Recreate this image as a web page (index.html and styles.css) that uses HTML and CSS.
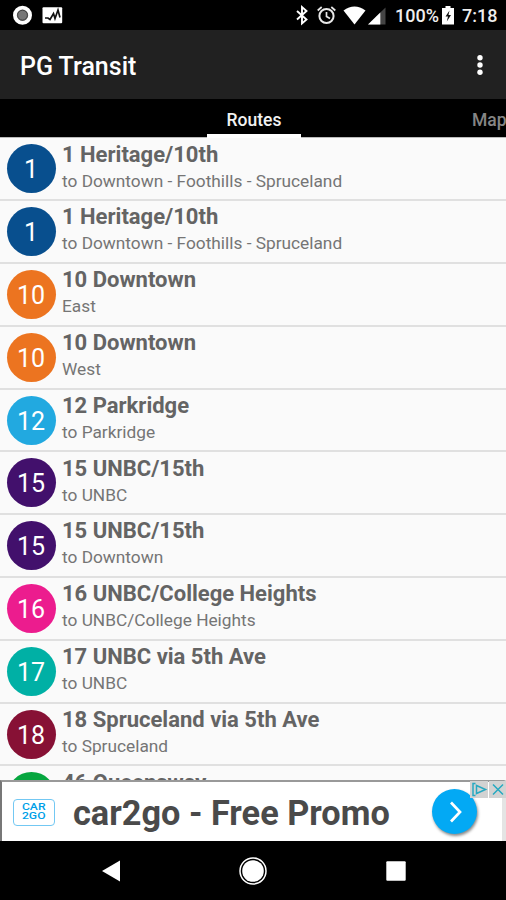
FILE: index.html
```html
<!DOCTYPE html>
<html lang="en">
<head>
<meta charset="utf-8">
<title>PG Transit</title>
<link rel="stylesheet" href="styles.css">
</head>
<body>
<div class="phone">
  <header class="status">
    <svg class="status-left" width="70" height="30" viewBox="0 0 70 30">
      <circle cx="22.5" cy="15.2" r="7.6" fill="#666" stroke="#fff" stroke-width="3.800"/>
      <circle cx="22.5" cy="15.2" r="4.900" fill="#777" stroke="#444" stroke-width="1"/>
      <rect x="42.5" y="7.3" width="19.7" height="16" rx="1" fill="#fff"/>
      <path d="M45 18h3l2 1.500 3.500-6 1.500 5 3-8.500 2 7.500" fill="none" stroke="#111" stroke-width="1.7"/>
    </svg>
    <svg class="status-icons" width="98" height="30" viewBox="290 0 98 30">
      <path d="M297 11l9.500 8.500-4.500 4V7l4.500 4-9.500 8.500" fill="none" stroke="#fff" stroke-width="1.900"/>
      <circle cx="326.500" cy="16" r="7.100" fill="none" stroke="#e8e8e8" stroke-width="2"/>
      <path d="M317.700 10.500l4-3.500M335.300 10.500l-4-3.500M326.500 12v4.500l3.500 2" fill="none" stroke="#e8e8e8" stroke-width="1.700"/>
      <path d="M343.500 10.500q11-8 22 0L354.500 24.500z" fill="#fff"/>
      <path d="M385.500 7.500V24.500H368z" fill="#444"/>
      <path d="M380.300 12.500V24.500H368z" fill="#fff"/>
    </svg>
    <span class="battery-level">100%</span>
    <svg class="battery" width="12" height="19" viewBox="0 0 12 19">
      <path d="M3.500 2V0h5v2H12v16.500H0V2z" fill="#fff"/>
      <path d="M7.500 4.500L3.500 10.500H6L4.800 15.500 9 9H6.500z" fill="#111"/>
    </svg>
    <span class="clock">7:18</span>
  </header>
  <div class="appbar">
    <h1>PG Transit</h1>
    <svg class="more" width="8" height="24" viewBox="0 0 8 24"><g fill="#fff"><circle cx="4" cy="4.700" r="2.700"/><circle cx="4" cy="12" r="2.700"/><circle cx="4" cy="19.300" r="2.700"/></g></svg>
  </div>
  <nav class="tabs">
    <span class="tab active">Routes</span>
    <span class="tab next">Map</span>
  </nav>
  <main class="routes">
    <div class="route"><span class="badge heritage">1</span><div class="info"><h2>1 Heritage/10th</h2><p>to Downtown - Foothills - Spruceland</p></div></div>
    <div class="route"><span class="badge heritage">1</span><div class="info"><h2>1 Heritage/10th</h2><p>to Downtown - Foothills - Spruceland</p></div></div>
    <div class="route"><span class="badge downtown">10</span><div class="info"><h2>10 Downtown</h2><p>East</p></div></div>
    <div class="route"><span class="badge downtown">10</span><div class="info"><h2>10 Downtown</h2><p>West</p></div></div>
    <div class="route"><span class="badge parkridge">12</span><div class="info"><h2>12 Parkridge</h2><p>to Parkridge</p></div></div>
    <div class="route"><span class="badge unbc">15</span><div class="info"><h2>15 UNBC/15th</h2><p>to UNBC</p></div></div>
    <div class="route"><span class="badge unbc">15</span><div class="info"><h2>15 UNBC/15th</h2><p>to Downtown</p></div></div>
    <div class="route"><span class="badge college">16</span><div class="info"><h2>16 UNBC/College Heights</h2><p>to UNBC/College Heights</p></div></div>
    <div class="route"><span class="badge fifth">17</span><div class="info"><h2>17 UNBC via 5th Ave</h2><p>to UNBC</p></div></div>
    <div class="route"><span class="badge spruceland">18</span><div class="info"><h2>18 Spruceland via 5th Ave</h2><p>to Spruceland</p></div></div>
    <div class="route"><span class="badge queensway"></span><div class="info"><h2>46 Queensway</h2></div></div>
  </main>
  <aside class="ad">
    <div class="ad-logo"><span>CAR</span><span>2GO</span></div>
    <strong>car2go - Free Promo</strong>
    <span class="go"><svg width="14" height="24" viewBox="0 0 14 24"><path d="M2 2.500l9 9.500-9 9.500" fill="none" stroke="#fff" stroke-width="2.700"/></svg></span>
    <div class="choices">
      <svg width="18" height="17" viewBox="0 0 18 17"><path d="M5.500 2.500H3v12h2.500M6.500 4.500l9 4-9 4z" fill="none" stroke="#27a9c1" stroke-width="1.500"/></svg>
      <svg width="17" height="17" viewBox="0 0 17 17"><path d="M4 3.500l10 10M14 3.500l-10 10" fill="none" stroke="#27a9c1" stroke-width="1.500"/></svg>
    </div>
  </aside>
  <footer class="navbar">
    <svg width="20" height="22" viewBox="0 0 20 22"><path d="M19 .5v21L1 11z" fill="#fff"/></svg>
    <svg width="30" height="30" viewBox="0 0 30 30"><circle cx="15" cy="15" r="13" fill="none" stroke="#fff" stroke-width="1.500"/><circle cx="15" cy="15" r="10.800" fill="#fff"/></svg>
    <svg width="20" height="20" viewBox="0 0 20 20"><rect x=".3" y=".3" width="19.400" height="19.400" rx="1" fill="#fff"/></svg>
  </footer>
</div>
</body>
</html>
```
FILE: styles.css
```css
* { box-sizing: border-box; }
body { margin: 0; background: #000; font-family: Roboto, sans-serif; }
h1, h2, p { margin: 0; white-space: nowrap; }
svg { display: block; flex: none; }
.phone {
  width: 506px;
  height: 900px;
  display: grid;
  grid-template-rows: 30px 69px 39px 642px 61px 59px;
  overflow: hidden;
}
.status { display: flex; align-items: center; background: #000; color: #eee; font-size: 18px; font-weight: 500; line-height: 30px; padding-right: 9px; }
.status-icons { margin-left: auto; }
.battery-level { width: 46px; margin-left: 7px; padding-top: 2px; }
.battery { margin-left: 1px; }
.clock { width: 35px; margin-left: 8px; padding-top: 2px; }
.appbar { display: flex; align-items: center; justify-content: space-between; padding: 4px 22px 0 20px; background: #212121; color: #fff; }
.appbar h1 { font-size: 25px; font-weight: 500; line-height: 36px; }
.more { margin-top: -4px; }
.tabs { display: grid; grid-template-columns: 207px 94px 1fr; background: #000; color: #f2f2f2; font-size: 17.5px; font-weight: 500; line-height: 42px; border-bottom: 1px solid #bbb; }
.tab { white-space: nowrap; }
.active { grid-column: 2; text-align: center; border-bottom: 4px solid #fff; height: 39px; }
.next { color: #858585; padding-left: 171px; overflow: hidden; }
.routes { background: #fafafa; overflow: hidden; padding-top: .4px; }
.route { height: 62.8px; display: flex; align-items: flex-start; padding: 6px 7px 0; border-bottom: 2px solid #e0e0e0; }
.badge { width: 49px; height: 49px; flex: none; border-radius: 50%; color: #fff; font-size: 25px; line-height: 51px; text-align: center; padding-right: 1px; }
.heritage { background: #084f8e; }
.downtown { background: #ec7420; }
.parkridge { background: #22a9e0; }
.unbc { background: #42106c; }
.college { background: #ec1c8e; }
.fifth { background: #00b0a5; }
.spruceland { background: #871135; }
.queensway { background: #06a63f; }
.info { margin-left: 6px; color: #646464; }
.info h2 { font-size: 22px; font-weight: 700; line-height: 26px; margin-top: -2.8px; }
.info p { font-size: 17.3px; line-height: 22px; margin-top: 2px; color: #757575; }
.ad { position: relative; display: flex; align-items: center; background: #fff; border-top: 2px solid #999; border-left: 2px solid #777; border-right: 4px solid #e4e4e4; padding-left: 11px; }
.ad-logo { width: 42px; height: 27px; border: 1px solid #73c8f3; border-radius: 4px; display: flex; flex-direction: column; align-items: center; justify-content: center; color: #009fe8; font-size: 9px; font-weight: 500; line-height: 9px; margin-top: 1px; }
.ad-logo span { transform: scaleX(1.35); }
.ad strong { font-size: 34.3px; font-weight: 700; color: #4a4a4a; line-height: 50px; white-space: nowrap; margin: 2px 0 0 18px; width: 319px; }
.go { width: 45px; height: 45px; margin-left: 40px; border-radius: 50%; background: #03a9f4; display: flex; align-items: center; justify-content: center; padding-left: 2px; box-shadow: 1px 2px 3px #0007; }
.choices { position: absolute; top: -1px; right: -4px; display: flex; gap: 1px; }
.choices svg { background: #d2d2d2; }
.navbar { display: flex; align-items: center; background: #000; padding: 1px 0 0 101px; }
.navbar svg:nth-child(2) { margin-left: 117px; }
.navbar svg:nth-child(3) { margin-left: 118px; }
```
